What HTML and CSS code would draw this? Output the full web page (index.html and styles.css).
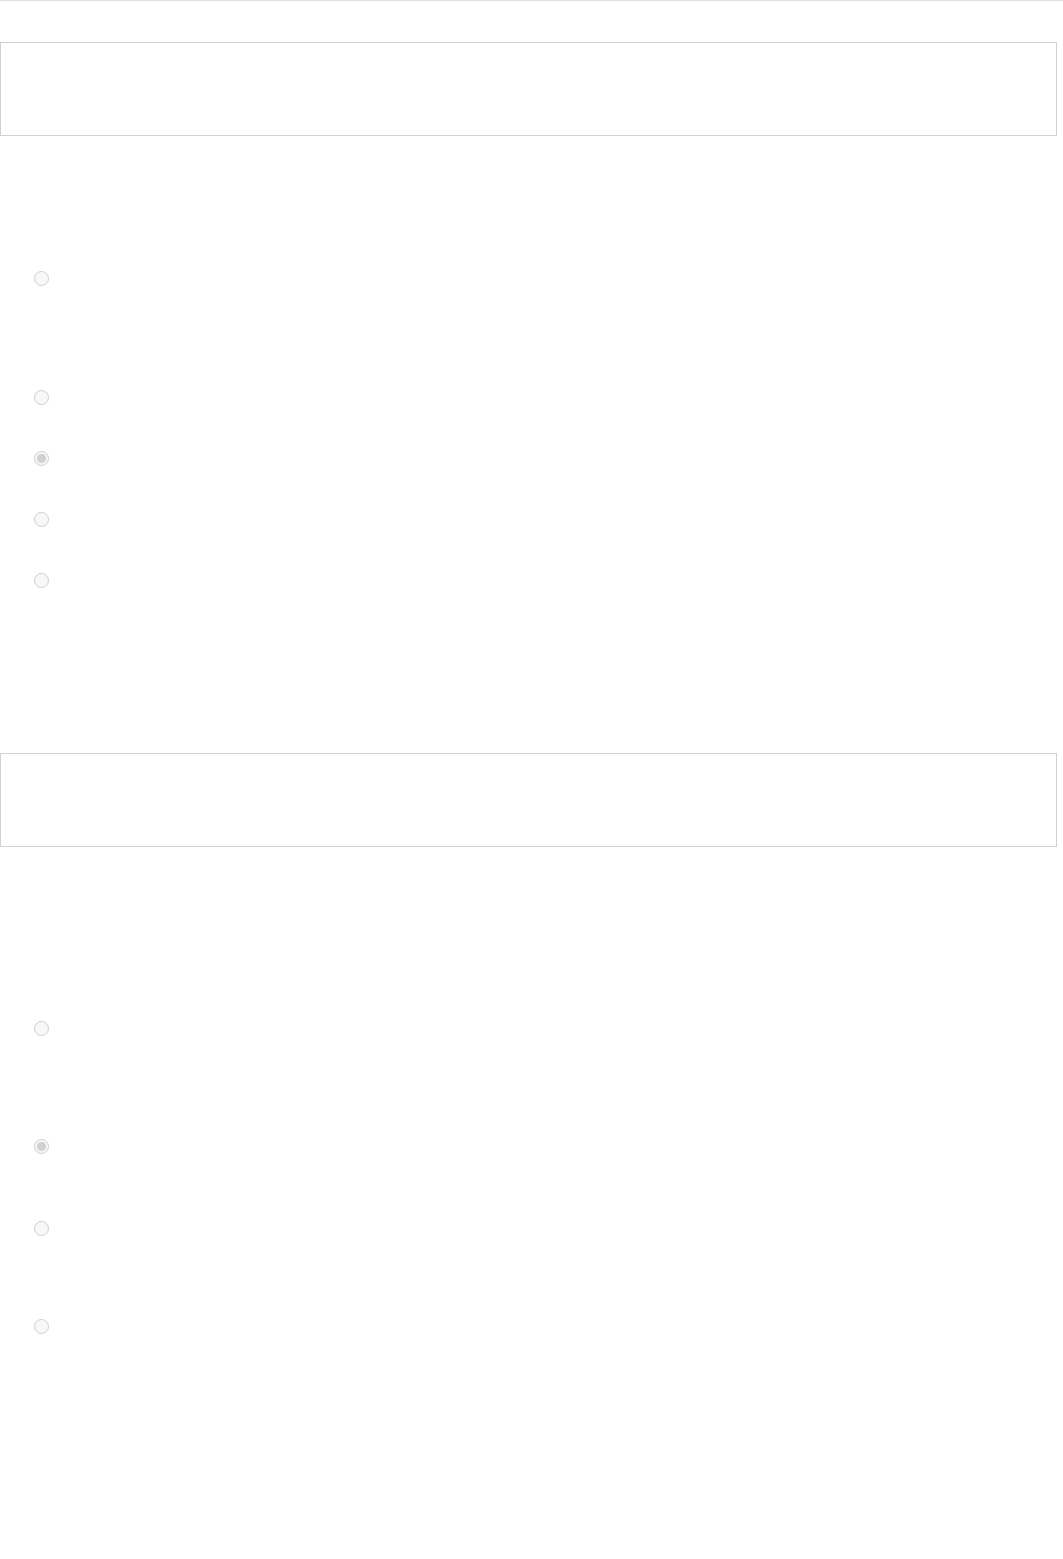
FILE: index.html
```html
<!DOCTYPE html>
<html lang="en">
<head>
  <meta charset="UTF-8">
  <meta name="viewport" content="width=device-width, initial-scale=1.0">
  <title>Quiz</title>
  <link rel="stylesheet" href="styles.css">
</head>
<body>
  <div class="top-bar"></div>

  <div class="quiz">
    <div class="question-box"></div>
    <div class="options first">
      <label class="option tall"><input type="radio" name="q1" disabled></label>
      <label class="option"><input type="radio" name="q1" disabled></label>
      <label class="option"><input type="radio" name="q1" checked disabled></label>
      <label class="option"><input type="radio" name="q1" disabled></label>
      <label class="option"><input type="radio" name="q1" disabled></label>
    </div>

    <div class="question-box"></div>
    <div class="options second">
      <label class="option tall"><input type="radio" name="q2" disabled></label>
      <label class="option mid"><input type="radio" name="q2" checked disabled></label>
      <label class="option wide"><input type="radio" name="q2" disabled></label>
      <label class="option"><input type="radio" name="q2" disabled></label>
    </div>
  </div>
</body>
</html>
```

FILE: styles.css
```css
body {
  font-family: "Liberation Sans", Arial, sans-serif;
  background-color: #fff;
  color: #333;
  margin: 0;
}

.top-bar {
  height: 1px;
  background-color: #dde1e6;
}

.quiz {
  padding-top: 41px;
}

.question-box {
  height: 92px;
  margin-right: 6px;
  border: 1px solid #ccd2dc;
}

.options {
  display: flex;
  flex-direction: column;
}

.options.first {
  padding-top: 112px;
  padding-bottom: 142px;
}

.options.second {
  padding-top: 151px;
}

.option {
  display: flex;
  align-items: flex-start;
  padding: 23px 0 23px 34px;
}

.option input {
  width: 15px;
  height: 15px;
  margin: 0;
}

.option.tall {
  padding-bottom: 80px;
}

.options.first .option.tall {
  padding-bottom: 81px;
}

.option.mid {
  padding-bottom: 44px;
}

.option.wide {
  padding-bottom: 60px;
}
```
